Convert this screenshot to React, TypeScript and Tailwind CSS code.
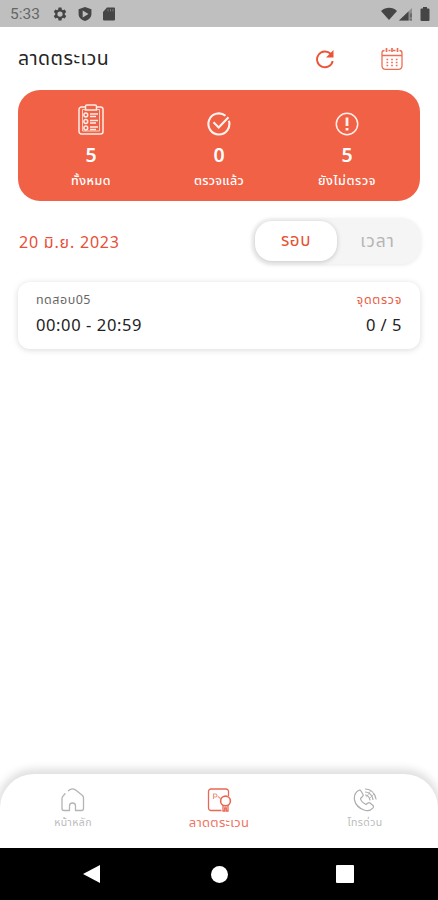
import React from "react";

function StatusBar() {
  return (
    <div className="flex h-[27px] shrink-0 items-center bg-[#bfbfbf] px-[10px] text-[#454545]">
      <span className="w-[43px] font-['Roboto'] text-[15.5px] leading-[27px] text-[#666] pt-[2px]">5:33</span>
      <svg width="14" height="14" viewBox="0 0 24 24" fill="currentColor" className="mt-[1px]">
        <path
          fillRule="evenodd"
          d="M9.5 1h5l.6 3.3 2 1.1 3.1-1.1 2.5 4.3-2.5 2.2v2.4l2.5 2.2-2.5 4.3-3.1-1.1-2 1.1-.6 3.3h-5l-.6-3.3-2-1.1-3.1 1.1-2.5-4.3 2.5-2.2v-2.4L1.300 8.600l2.500-4.300 3.100 1.100 2-1.100zM12 7.500a4.500 4.500 0 1 0 0 9 4.500 4.500 0 0 0 0-9z"
        />
      </svg>
      <svg width="14" height="14" viewBox="0 0 24 24" fill="currentColor" className="ml-[11px] mt-[1px]">
        <path fillRule="evenodd" d="M12 0l11 4v8c0 6-5 10.500-11 12C6 22.500 1 18 1 12V4zM8 6v12l10-6z" />
      </svg>
      <svg width="12" height="14" viewBox="0 0 12 14" className="ml-[11px] mt-[1px]">
        <path fill="currentColor" d="M4 .5h7a1 1 0 0 1 1 1v11a1 1 0 0 1-1 1H1a1 1 0 0 1-1-1V5z" />
        <path stroke="#777" strokeWidth="1" d="M5 2v2.500M7.500 2v2.500M10 2v2.500" />
      </svg>
      <svg width="50" height="16" viewBox="0 0 50 16" className="ml-auto mr-[-3px]" fill="currentColor">
        <path d="M0 5C5 .8 11.500 .8 16 5L8 14z" />
        <path d="M18 14.500L31 2v12.500z" opacity=".4" />
        <path d="M18 14.500L27.500 5.500v9z" />
        <path d="M29.500 7.500h1v4h-1zM29.500 13h1v1.500h-1z" />
        <path d="M42 1h4v1.500h1.500a1 1 0 0 1 1 1V14a1 1 0 0 1-1 1h-7a1 1 0 0 1-1-1V3.500a1 1 0 0 1 1-1H42z" />
      </svg>
    </div>
  );
}

function RefreshIcon() {
  return (
    <svg width="20" height="20" viewBox="0 0 20 20" fill="none" stroke="#e9553a" strokeWidth="1.9">
      <path d="M15.800 5A7.900 7.900 0 1 0 17.700 12" />
      <path d="M18.500 1v7.500H11z" fill="#e9553a" stroke="none" />
    </svg>
  );
}

function CalendarIcon() {
  return (
    <svg width="22" height="24" viewBox="0 0 22 24" fill="none" stroke="#ee6d55" strokeWidth="1.3">
      <path d="M3.500 3.500C1.800 3.500 1 4.500 1 6v12.500C1 21 2.500 22.300 4.500 22.300h13c2 0 3.500-1.300 3.500-3.800V6c0-1.500-.8-2.500-2.500-2.500M7.500 3.500h2M12 3.500h2.500" />
      <path d="M5.500 1v4M11 1v4M16.500 1v4" strokeWidth="1.700" />
      <path d="M1 8.500h20" strokeWidth="1.500" />
      <path d="M5.500 12.500h11M5.500 15.500h11M5.500 18.500h11" strokeDasharray="1.700 2.950" strokeWidth="1.500" />
    </svg>
  );
}

function ChecklistIcon() {
  return (
    <svg width="26" height="32" viewBox="0 0 26 32" fill="none" stroke="#ffece6" strokeWidth="1.500">
      <path d="M7 3H3.500A2.500 2.500 0 0 0 1 5.500v22A2.500 2.500 0 0 0 3.500 30h19a2.500 2.500 0 0 0 2.500-2.500v-22A2.500 2.500 0 0 0 22.500 3H19" />
      <path d="M7.500 6v-3.500q0-1.500 1.500-1.500h8q1.500 0 1.500 1.500V6z" />
      <path d="M7 5.500H4.500v21.500h17V5.500H19" strokeWidth=".8" />
      <circle cx="7.800" cy="11" r="1.900" />
      <circle cx="7.800" cy="17.500" r="1.900" />
      <circle cx="7.800" cy="24" r="1.900" />
      <path d="M12 10h8M12 12.500h6M12 16.500h8M12 19h6M12 23h8M12 25.500h6" strokeWidth="1.500" />
    </svg>
  );
}

function CheckCircleIcon() {
  return (
    <svg width="24" height="24" viewBox="0 0 24 24" fill="none" stroke="#fff4f0" strokeWidth="2.100">
      <path d="M18.500 3.800A10.500 10.500 0 1 0 21.900 8.800" />
      <path d="M6.500 10.200l5.200 5.300L21.500 5.300" />
    </svg>
  );
}

function AlertCircleIcon() {
  return (
    <svg width="24" height="24" viewBox="0 0 24 24" fill="none" stroke="#fff0eb">
      <circle cx="12" cy="12" r="10.700" strokeWidth="1.500" />
      <path d="M12 5.500v8.500M12 16v2.500" strokeWidth="2.800" />
    </svg>
  );
}

function HomeIcon() {
  return (
    <svg width="24" height="24" viewBox="0 0 24 24" fill="none" stroke="#b4b4b4" strokeWidth="1.300" strokeLinecap="round" strokeLinejoin="round">
      <path d="M4 5.800L2.500 7.500Q1 9 1 10.500V20.500Q1 22.500 3 22.500H8.500V18Q8.500 15 11.500 15T14.500 18V22.500H20.500Q22.500 22.500 22.500 20.500V10Q22.500 8.500 21.500 7.500L14 1.600Q11.500 0 9 1.600L7.500 2.800" />
    </svg>
  );
}

function PatrolIcon() {
  return (
    <svg width="25" height="25" viewBox="0 0 25 25" fill="none" stroke="#e96855" strokeWidth="1.300">
      <path d="M14.500 22.500H4A2.500 2.500 0 0 1 1.500 20V3.500A2.500 2.500 0 0 1 4 1h15a2.500 2.500 0 0 1 2.500 2.500V8" />
      <path d="M6.500 11V6h2a1.500 1.500 0 0 1 0 3H6.500M11 8.500l2.500 2" opacity=".7" strokeWidth="1.100" />
      <circle cx="18.500" cy="13" r="4.900" strokeWidth="1.600" />
      <path d="M16 17v6h1.700v-3h1.600v3H21v-6" />
    </svg>
  );
}

function CallIcon() {
  return (
    <svg width="24" height="24" viewBox="0 0 24 24" fill="none" stroke="#adadad" strokeWidth="1.200" strokeLinecap="round" strokeLinejoin="round">
      <path d="M5.500 2.500Q7 1.500 8 3L10 6.500Q10.500 8 9 9L7.500 10.500Q8 14 13 16.500L15 15Q16 14.300 17 15L20 17.500Q21 18.500 20 19.800Q16.500 24 11 22Q3 19 1.500 12Q.5 5.500 5.500 2.500Z" />
      <path d="M12.500 1Q21 1.500 23 11M12.500 4Q18.500 4.500 20 11.500M12.500 7Q16 7.500 17 12" />
      <path d="M13.500 9l4-6M17 10l4-4" strokeWidth=".7" />
    </svg>
  );
}

type StatProps = { icon: React.ReactNode; value: string; label: string; labelClass: string };

function Stat({ icon, value, label, labelClass }: StatProps) {
  return (
    <div className="flex w-[128px] flex-col items-center text-white">
      <div className="flex h-[33px] items-end justify-center">{icon}</div>
      <div className="mt-[7px] h-[24px] text-[19.5px] leading-[26px] font-semibold">{value}</div>
      <div className={"mt-[4px] h-[22px] whitespace-nowrap leading-[21px] font-medium " + labelClass}>{label}</div>
    </div>
  );
}

type NavProps = { icon: React.ReactNode; label: string; className: string };

function NavItem({ icon, label, className }: NavProps) {
  return (
    <div className="flex w-[146px] flex-col items-center">
      <div className="h-[25px]">{icon}</div>
      <span className={"whitespace-nowrap leading-[20px] " + className}>{label}</span>
    </div>
  );
}

export default function App() {
  return (
    <div className="flex h-[900px] w-[438px] flex-col overflow-hidden bg-white font-['Noto_Sans_Thai','Noto_Sans',sans-serif] text-[#222]">
      <StatusBar />
      <header className="flex h-[63px] shrink-0 items-center pr-[35px] pl-[18px]">
        <h1 className="mt-px text-[19.5px] leading-[28px] tracking-[0.5px] text-[#252525]">ลาดตระเวน</h1>
        <div className="mr-[46px] ml-auto"><RefreshIcon /></div>
        <CalendarIcon />
      </header>

      <section className="mx-[18px] flex h-[111px] shrink-0 justify-center rounded-[22px] bg-[#f06145] pt-[13px]">
        <Stat icon={<ChecklistIcon />} value="5" label="ทั้งหมด" labelClass="text-[12.5px] tracking-[0.5px]" />
        <Stat icon={<CheckCircleIcon />} value="0" label="ตรวจแล้ว" labelClass="text-[12.5px] tracking-[0.3px]" />
        <Stat icon={<AlertCircleIcon />} value="5" label="ยังไม่ตรวจ" labelClass="text-[12.5px] tracking-[0.6px]" />
      </section>

      <div className="mt-[17px] flex h-[46px] shrink-0 items-center justify-between pr-[17px] pl-[19px]">
        <span className="mt-[3px] text-[16px] tracking-[0.8px] text-[#ea4e36]">20 มิ.ย. 2023</span>
        <div className="flex h-[46px] w-[169px] rounded-[20px] bg-[#f5f5f5] p-[3px] shadow-[0_1px_4px_rgba(0,0,0,0.09)]">
          <div className="flex w-[82px] items-center justify-center rounded-[17px] bg-white pt-[2px] text-[17px] tracking-[0.5px] text-[#e6512f] shadow-[0_1px_5px_rgba(0,0,0,0.2)]">รอบ</div>
          <div className="flex flex-1 items-center justify-center pt-[2px] text-[17.5px] tracking-[0.9px] text-[#b5b5b5]">เวลา</div>
        </div>
      </div>

      <section className="mx-[18px] mt-[18px] flex h-[67px] shrink-0 justify-between rounded-[12px] bg-white px-[18px] pt-[8px] shadow-[0_1px_6px_rgba(0,0,0,0.15)]">
        <div className="flex flex-col">
          <span className="h-[24px] text-[12.5px] leading-[22px] tracking-[0.5px] text-[#666]">ทดสอบ05</span>
          <span className="text-[16.5px] leading-[24px] tracking-[0.6px] text-[#222]">00:00 - 20:59</span>
        </div>
        <div className="flex flex-col items-end">
          <span className="h-[24px] text-[12.5px] leading-[22px] tracking-[0.7px] text-[#e85c43]">จุดตรวจ</span>
          <span className="text-[16.5px] leading-[24px] tracking-[0.5px] text-[#222]">0 / 5</span>
        </div>
      </section>

      <nav className="mt-auto flex h-[74px] shrink-0 rounded-t-[34px] bg-white pt-[14px] shadow-[0_-2px_8px_3px_rgba(0,0,0,0.13)]">
        <NavItem icon={<HomeIcon />} label="หน้าหลัก" className="text-[10.5px] tracking-[0.4px] text-[#bbb]" />
        <NavItem icon={<PatrolIcon />} label="ลาดตระเวน" className="text-[13px] tracking-[0.3px] text-[#ee7464]" />
        <NavItem icon={<CallIcon />} label="โทรด่วน" className="text-[10.5px] tracking-[0.4px] text-[#bbb]" />
      </nav>
      <div className="z-10 flex h-[52px] shrink-0 items-center bg-black pl-[83px]">
        <svg width="17" height="18" viewBox="0 0 17 18" fill="white"><path d="M0 9L17 0v18z" /></svg>
        <div className="ml-[111px] h-[17px] w-[17px] rounded-full bg-white" />
        <div className="ml-[108px] h-[18px] w-[18px] rounded-[1px] bg-white" />
      </div>
    </div>
  );
}
